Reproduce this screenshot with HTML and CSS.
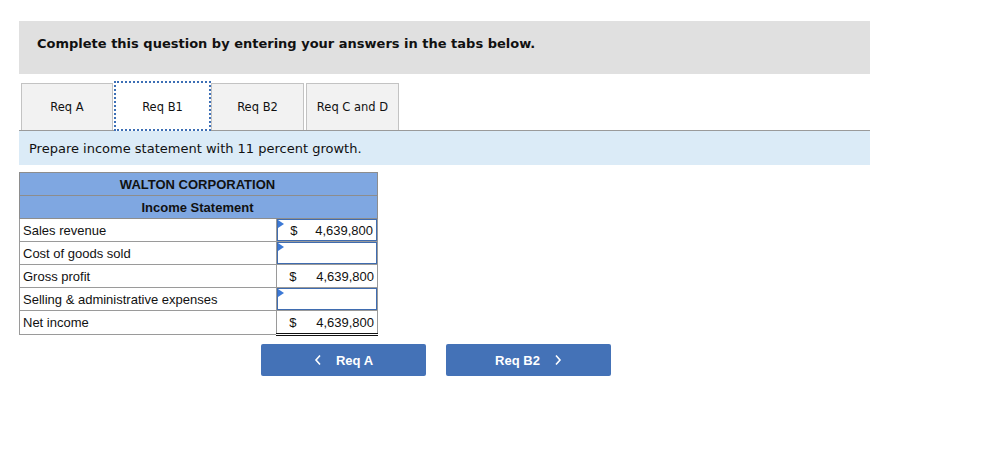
FILE: index.html
```html
<!DOCTYPE html>
<html>
<head>
<meta charset="utf-8">
<link rel="stylesheet" href="styles.css">
</head>
<body>
<div class="page">
  <div class="banner">Complete this question by entering your answers in the tabs below.</div>
  <div class="tabs">
    <div class="tab first">Req A</div>
    <div class="tab active">Req B1</div>
    <div class="tab">Req B2</div>
    <div class="tab last">Req C and D</div>
  </div>
  <div class="instruction">Prepare income statement with 11 percent growth.</div>
  <table class="stmt">
    <tr><th colspan="2" class="title">WALTON CORPORATION</th></tr>
    <tr><th colspan="2" class="sub">Income Statement</th></tr>
    <tr><td class="label">Sales revenue</td><td class="val"><div class="input filled"><span class="cur">$</span><span class="num">4,639,800</span></div></td></tr>
    <tr><td class="label">Cost of goods sold</td><td class="val"><div class="input"></div></td></tr>
    <tr><td class="label">Gross profit</td><td class="val"><div class="plain"><span class="cur">$</span><span class="num">4,639,800</span></div></td></tr>
    <tr><td class="label">Selling &amp; administrative expenses</td><td class="val"><div class="input"></div></td></tr>
    <tr><td class="label">Net income</td><td class="val total"><div class="plain"><span class="cur">$</span><span class="num">4,639,800</span></div></td></tr>
  </table>
  <div class="nav">
    <button class="btn"><svg class="chev" width="8" height="12" viewBox="0 0 8 12"><polyline points="6,1.5 2,6 6,10.5" fill="none" stroke="#fff" stroke-width="1.6"/></svg><span>Req A</span></button>
    <button class="btn"><span>Req B2</span><svg class="chev right" width="8" height="12" viewBox="0 0 8 12"><polyline points="2,1.5 6,6 2,10.5" fill="none" stroke="#fff" stroke-width="1.6"/></svg></button>
  </div>
</div>
</body>
</html>
```

FILE: styles.css
```css
html, body {
  margin: 0;
  padding: 0;
  background: #fff;
}
.page {
  padding: 21px 0 0 19px;
  width: 851px;
}
.banner {
  background: #e0e0e0;
  height: 53px;
  box-sizing: border-box;
  padding: 15px 0 0 18px;
  font-family: "DejaVu Sans", Verdana, sans-serif;
  font-weight: bold;
  font-size: 13px;
  color: #111;
}
.tabs {
  display: flex;
  align-items: flex-end;
  margin-top: 7px;
  padding-left: 2px;
}
.tab {
  box-sizing: border-box;
  width: 93px;
  height: 47px;
  border: 1px solid #c3c3c3;
  border-bottom: none;
  background: #f2f2f2;
  display: flex;
  align-items: center;
  justify-content: center;
  font-family: "DejaVu Sans", Verdana, sans-serif;
  font-size: 11.5px;
  color: #111;
}
.tab.first {
  width: 92px;
  margin-right: 1px;
}
.tab.active {
  width: 97px;
  height: 50px;
  background: #fff;
  border: 2px dotted #3d6fb5;
  margin-bottom: -1px;
  position: relative;
  z-index: 1;
  padding-top: 1px;
}
.tab.last {
  margin-left: 2px;
}
.instruction {
  border-top: 1px solid #9a9a9a;
  background: #dbebf7;
  height: 35px;
  box-sizing: border-box;
  padding: 10px 0 0 10px;
  font-family: "DejaVu Sans", Verdana, sans-serif;
  font-size: 13px;
  color: #111;
}
.stmt {
  margin-top: 7px;
  border-collapse: collapse;
  width: 359px;
  font-family: "Liberation Sans", Arial, sans-serif;
  font-size: 13px;
  color: #111;
}
.stmt th {
  background: #7fa7e1;
  border: 1px solid #8d8d8d;
  height: 22px;
  padding: 0;
  font-weight: bold;
  text-align: center;
}
.stmt th.title,
.stmt th.sub {
  padding-right: 2px;
}
.stmt td {
  border: 1px solid #9a9a9a;
  height: 22px;
  padding: 0;
}
.stmt td.label {
  width: 257px;
  padding-left: 3px;
}
.stmt td.val {
  width: 100px;
}
.stmt td.total {
  border-bottom: 3px double #111;
}
.input, .plain {
  box-sizing: border-box;
  height: 22px;
  display: flex;
  align-items: center;
  justify-content: space-between;
  padding: 0 3px 0 12px;
}
.input {
  border: 1px solid #3f6cb0;
  position: relative;
}
.input::before {
  content: "";
  position: absolute;
  left: 0;
  top: 0;
  border-top: 4px solid transparent;
  border-bottom: 4px solid transparent;
  border-left: 6px solid #3c79d6;
}
.nav {
  display: flex;
  gap: 20px;
  margin: 8px 0 0 242px;
}
.btn {
  width: 165px;
  height: 32px;
  border: none;
  border-radius: 2px;
  background: #4472b7;
  color: #fff;
  font-family: "Liberation Sans", Arial, sans-serif;
  font-weight: bold;
  font-size: 13px;
  display: flex;
  align-items: center;
  justify-content: center;
  gap: 14px;
  padding: 0;
}
```
